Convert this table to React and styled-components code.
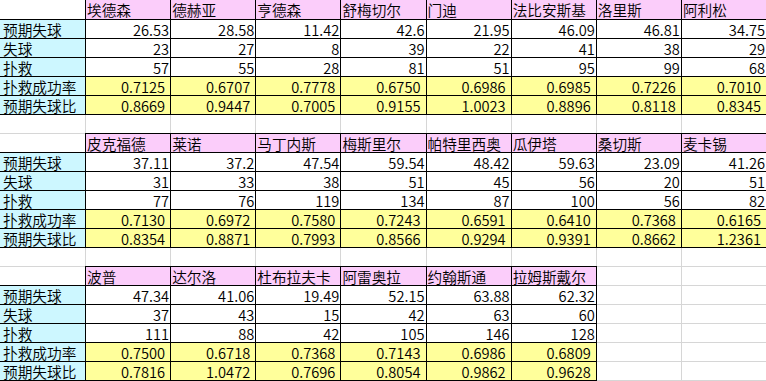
import React from 'react';
import styled, { createGlobalStyle, css } from 'styled-components';

const GlobalStyle = createGlobalStyle`
  html, body { margin: 0; padding: 0; background: #ffffff; }
  body { font-family: "Noto Sans CJK SC", "Noto Sans", sans-serif; }
`;

const COLS = 9;

const Sheet = styled.div`
  display: grid;
  width: 766px;
  grid-template-columns: 85px repeat(8, 1fr);
  grid-template-rows: 19px repeat(19, 18px);
  gap: 1px;
  padding-bottom: 1px;
  background: #d6d6d6;
`;

const fills = {
  blank: '#ffffff',
  head: '#fbcdfa',
  label: '#cdf7ff',
  num: '#ffffff',
  ratio: '#ffff9b',
};

const Cell = styled.div`
  min-width: 0;
  display: flex;
  align-items: center;
  justify-content: ${(p) => (p.$kind === 'num' || p.$kind === 'ratio' ? 'flex-end' : 'flex-start')};
  background: ${(p) => fills[p.$kind]};
  color: #000000;
  font-family: "Noto Sans CJK SC", "Noto Sans", sans-serif;
  font-weight: 350;
  font-size: 14.67px;
  line-height: 18px;
  white-space: nowrap;
  padding-top: 1px;
  padding-left: ${(p) => (p.$kind === 'label' ? '3px' : p.$kind === 'head' ? '1px' : '0')};
  padding-right: ${(p) => (p.$kind === 'ratio' ? '5px' : p.$kind === 'num' ? '1px' : '0')};
  ${(p) =>
    p.$kind !== 'blank' &&
    css`
      outline: 1px solid #000000;
    `}
`;

const LABELS = ['预期失球', '失球', '扑救', '扑救成功率', '预期失球比'];

const BLOCKS = [
  {
    names: ['埃德森', '德赫亚', '亨德森', '舒梅切尔', '门迪', '法比安斯基', '洛里斯', '阿利松'],
    rows: [
      ['26.53', '28.58', '11.42', '42.6', '21.95', '46.09', '46.81', '34.75'],
      ['23', '27', '8', '39', '22', '41', '38', '29'],
      ['57', '55', '28', '81', '51', '95', '99', '68'],
      ['0.7125', '0.6707', '0.7778', '0.6750', '0.6986', '0.6985', '0.7226', '0.7010'],
      ['0.8669', '0.9447', '0.7005', '0.9155', '1.0023', '0.8896', '0.8118', '0.8345'],
    ],
  },
  {
    names: ['皮克福德', '莱诺', '马丁内斯', '梅斯里尔', '帕特里西奥', '瓜伊塔', '桑切斯', '麦卡锡'],
    rows: [
      ['37.11', '37.2', '47.54', '59.54', '48.42', '59.63', '23.09', '41.26'],
      ['31', '33', '38', '51', '45', '56', '20', '51'],
      ['77', '76', '119', '134', '87', '100', '56', '82'],
      ['0.7130', '0.6972', '0.7580', '0.7243', '0.6591', '0.6410', '0.7368', '0.6165'],
      ['0.8354', '0.8871', '0.7993', '0.8566', '0.9294', '0.9391', '0.8662', '1.2361'],
    ],
  },
  {
    names: ['波普', '达尔洛', '杜布拉夫卡', '阿雷奥拉', '约翰斯通', '拉姆斯戴尔'],
    rows: [
      ['47.34', '41.06', '19.49', '52.15', '63.88', '62.32'],
      ['37', '43', '15', '42', '63', '60'],
      ['111', '88', '42', '105', '146', '128'],
      ['0.7500', '0.6718', '0.7368', '0.7143', '0.6986', '0.6809'],
      ['0.7816', '1.0472', '0.7696', '0.8054', '0.9862', '0.9628'],
    ],
  },
];

function padRow(cells, key) {
  const out = [...cells];
  while (out.length < COLS) {
    out.push(<Cell key={`${key}-b${out.length}`} $kind="blank" />);
  }
  return out;
}

function buildCells() {
  const cells = [];
  BLOCKS.forEach((block, bi) => {
    cells.push(
      ...padRow(
        [
          <Cell key={`h${bi}-0`} $kind="blank" />,
          ...block.names.map((n, i) => (
            <Cell key={`h${bi}-${i + 1}`} $kind="head">
              {n}
            </Cell>
          )),
        ],
        `h${bi}`
      )
    );
    block.rows.forEach((vals, ri) => {
      const kind = ri >= 3 ? 'ratio' : 'num';
      cells.push(
        ...padRow(
          [
            <Cell key={`r${bi}-${ri}-0`} $kind="label">
              {LABELS[ri]}
            </Cell>,
            ...vals.map((v, i) => (
              <Cell key={`r${bi}-${ri}-${i + 1}`} $kind={kind}>
                {v}
              </Cell>
            )),
          ],
          `r${bi}-${ri}`
        )
      );
    });
    if (bi < BLOCKS.length - 1) {
      cells.push(...padRow([], `e${bi}`));
    }
  });
  return cells;
}

export default function App() {
  return (
    <>
      <GlobalStyle />
      <Sheet>{buildCells()}</Sheet>
    </>
  );
}
